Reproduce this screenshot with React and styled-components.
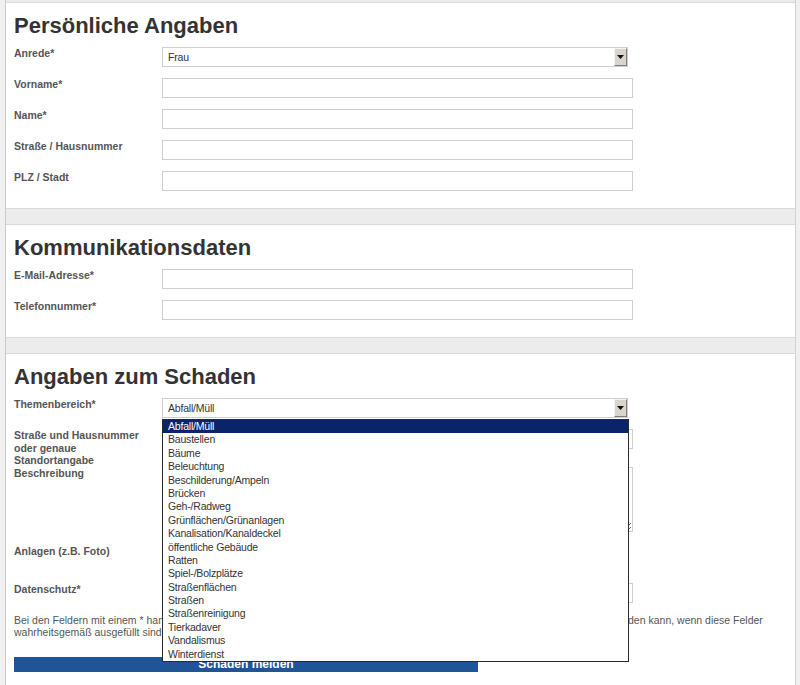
import React from "react";
import styled, { createGlobalStyle } from "styled-components";

const GlobalStyle = createGlobalStyle`
  html, body { margin: 0; padding: 0; }
  body {
    background: #f0f0f0;
    font-family: "Liberation Sans", Arial, sans-serif;
  }
  * { box-sizing: border-box; }
`;

const Wrapper = styled.div`
  margin-left: 5px;
  width: 791px;
  min-height: 685px;
  padding-top: 2px;
  background: #ececec;
  border-left: 1px solid #c9c9c9;
  border-right: 1px solid #d2d2d2;
`;

const Panel = styled.section`
  background: #fff;
  border-top: 1px solid #dadada;
  border-bottom: 1px solid #dadada;
  padding: 0 8px ${(p) => p.$pb ?? 5}px;
  margin-bottom: 15px;
`;

const Heading = styled.h2`
  margin: 10px 0 8px;
  font-size: 22px;
  line-height: 26px;
  font-weight: bold;
  color: #333;
`;

const Row = styled.div`
  display: grid;
  grid-template-columns: 148px 1fr;
  align-items: start;
`;

const Label = styled.label`
  font-size: 10.5px;
  line-height: 12.7px;
  font-weight: bold;
  color: #555;
  padding-right: 10px;
`;

const Field = styled.div`
  position: relative;
  padding-bottom: ${(p) => p.$gap ?? 11}px;
`;

const TextInput = styled.input`
  display: block;
  width: 471px;
  height: 20px;
  margin: 0;
  border: 1px solid #cfcfcf;
  background: #fff;
  padding: 0 4px;
  font: 10.5px "Liberation Sans", Arial, sans-serif;
`;

const TextArea = styled.textarea`
  display: block;
  width: 471px;
  height: 65px;
  margin: 0;
  border: 1px solid #cfcfcf;
  background: #fff;
  font: 10.5px "Liberation Sans", Arial, sans-serif;
`;

const FileSlot = styled.div`
  height: 27px;
`;

const Select = styled.div`
  position: relative;
  display: flex;
  align-items: stretch;
  width: 466px;
  height: 20px;
  border: 1px solid #cfcfcf;
  background: #fff;
  font-size: 10.5px;
  letter-spacing: -0.2px;
  color: #333;
`;

const SelectValue = styled.span`
  flex: 1;
  display: flex;
  align-items: center;
  padding-left: 5px;
`;

const SelectButton = styled.span`
  width: 13px;
  display: flex;
  align-items: center;
  justify-content: center;
  background: #d8d5cf;
  border: 1px solid;
  border-color: #f4f4f4 #7e7e7e #7e7e7e #f4f4f4;
`;

const DropList = styled.ul`
  position: absolute;
  top: 20px;
  left: -1px;
  width: 467px;
  margin: 0;
  padding: 0;
  list-style: none;
  background: #fff;
  border: 1px solid #2b2b2b;
  z-index: 10;
`;

const Option = styled.li`
  height: 13.4px;
  line-height: 13.4px;
  padding-left: 5px;
  font-size: 10.5px;
  letter-spacing: -0.2px;
  white-space: nowrap;
  color: ${(p) => (p.$selected ? "#fff" : "#333")};
  background: ${(p) => (p.$selected ? "#0a246a" : "transparent")};
`;

const Note = styled.p`
  margin: 0;
  font-size: 10.5px;
  line-height: 12px;
  color: #555;
`;

const Submit = styled.button`
  display: block;
  margin: 19px 0 0;
  width: 464px;
  height: 15px;
  padding: 0;
  border: none;
  background: #1f5596;
  color: #fff;
  font: bold 12px/15px "Liberation Sans", Arial, sans-serif;
  text-align: center;
`;

const Arrow = () => (
  <svg width="7" height="4" viewBox="0 0 7 4">
    <polygon points="0,0 7,0 3.5,4" fill="#111" />
  </svg>
);

const FakeSelect = ({ value, options, open }) => (
  <Select>
    <SelectValue>{value}</SelectValue>
    <SelectButton>
      <Arrow />
    </SelectButton>
    {open && (
      <DropList>
        {options.map((o) => (
          <Option key={o} $selected={o === value}>
            {o}
          </Option>
        ))}
      </DropList>
    )}
  </Select>
);

const topics = [
  "Abfall/Müll",
  "Baustellen",
  "Bäume",
  "Beleuchtung",
  "Beschilderung/Ampeln",
  "Brücken",
  "Geh-/Radweg",
  "Grünflächen/Grünanlagen",
  "Kanalisation/Kanaldeckel",
  "öffentliche Gebäude",
  "Ratten",
  "Spiel-/Bolzplätze",
  "Straßenflächen",
  "Straßen",
  "Straßenreinigung",
  "Tierkadaver",
  "Vandalismus",
  "Winterdienst",
];

const InputRow = ({ label }) => (
  <Row>
    <Label>{label}</Label>
    <Field>
      <TextInput type="text" />
    </Field>
  </Row>
);

export default function App() {
  return (
    <>
      <GlobalStyle />
      <Wrapper>
        <Panel $pb={6}>
          <Heading>Persönliche Angaben</Heading>
          <Row>
            <Label>Anrede*</Label>
            <Field>
              <FakeSelect value="Frau" options={["Frau", "Herr"]} />
            </Field>
          </Row>
          <InputRow label="Vorname*" />
          <InputRow label="Name*" />
          <InputRow label="Straße / Hausnummer" />
          <InputRow label="PLZ / Stadt" />
        </Panel>

        <Panel $pb={6}>
          <Heading>Kommunikationsdaten</Heading>
          <InputRow label="E-Mail-Adresse*" />
          <InputRow label="Telefonnummer*" />
        </Panel>

        <Panel $pb={30}>
          <Heading>Angaben zum Schaden</Heading>
          <Row>
            <Label>Themenbereich*</Label>
            <Field>
              <FakeSelect value="Abfall/Müll" options={topics} open />
            </Field>
          </Row>
          <Row>
            <Label>Straße und Hausnummer oder genaue Standortangabe</Label>
            <Field>
              <TextInput type="text" />
            </Field>
          </Row>
          <Row>
            <Label>Beschreibung</Label>
            <Field $gap={13}>
              <TextArea />
            </Field>
          </Row>
          <Row>
            <Label>Anlagen (z.B. Foto)</Label>
            <Field>
              <FileSlot />
            </Field>
          </Row>
          <Row>
            <Label>Datenschutz*</Label>
            <Field>
              <TextInput type="text" />
            </Field>
          </Row>
          <Note>
            Bei den Feldern mit einem * handelt es sich um Pflichtfelder, da Ihre
            Schadensmeldung erst dann von uns vollständig bearbeitet werden kann, wenn
            diese Felder wahrheitsgemäß ausgefüllt sind.
          </Note>
          <Submit type="button">Schaden melden</Submit>
        </Panel>
      </Wrapper>
    </>
  );
}
